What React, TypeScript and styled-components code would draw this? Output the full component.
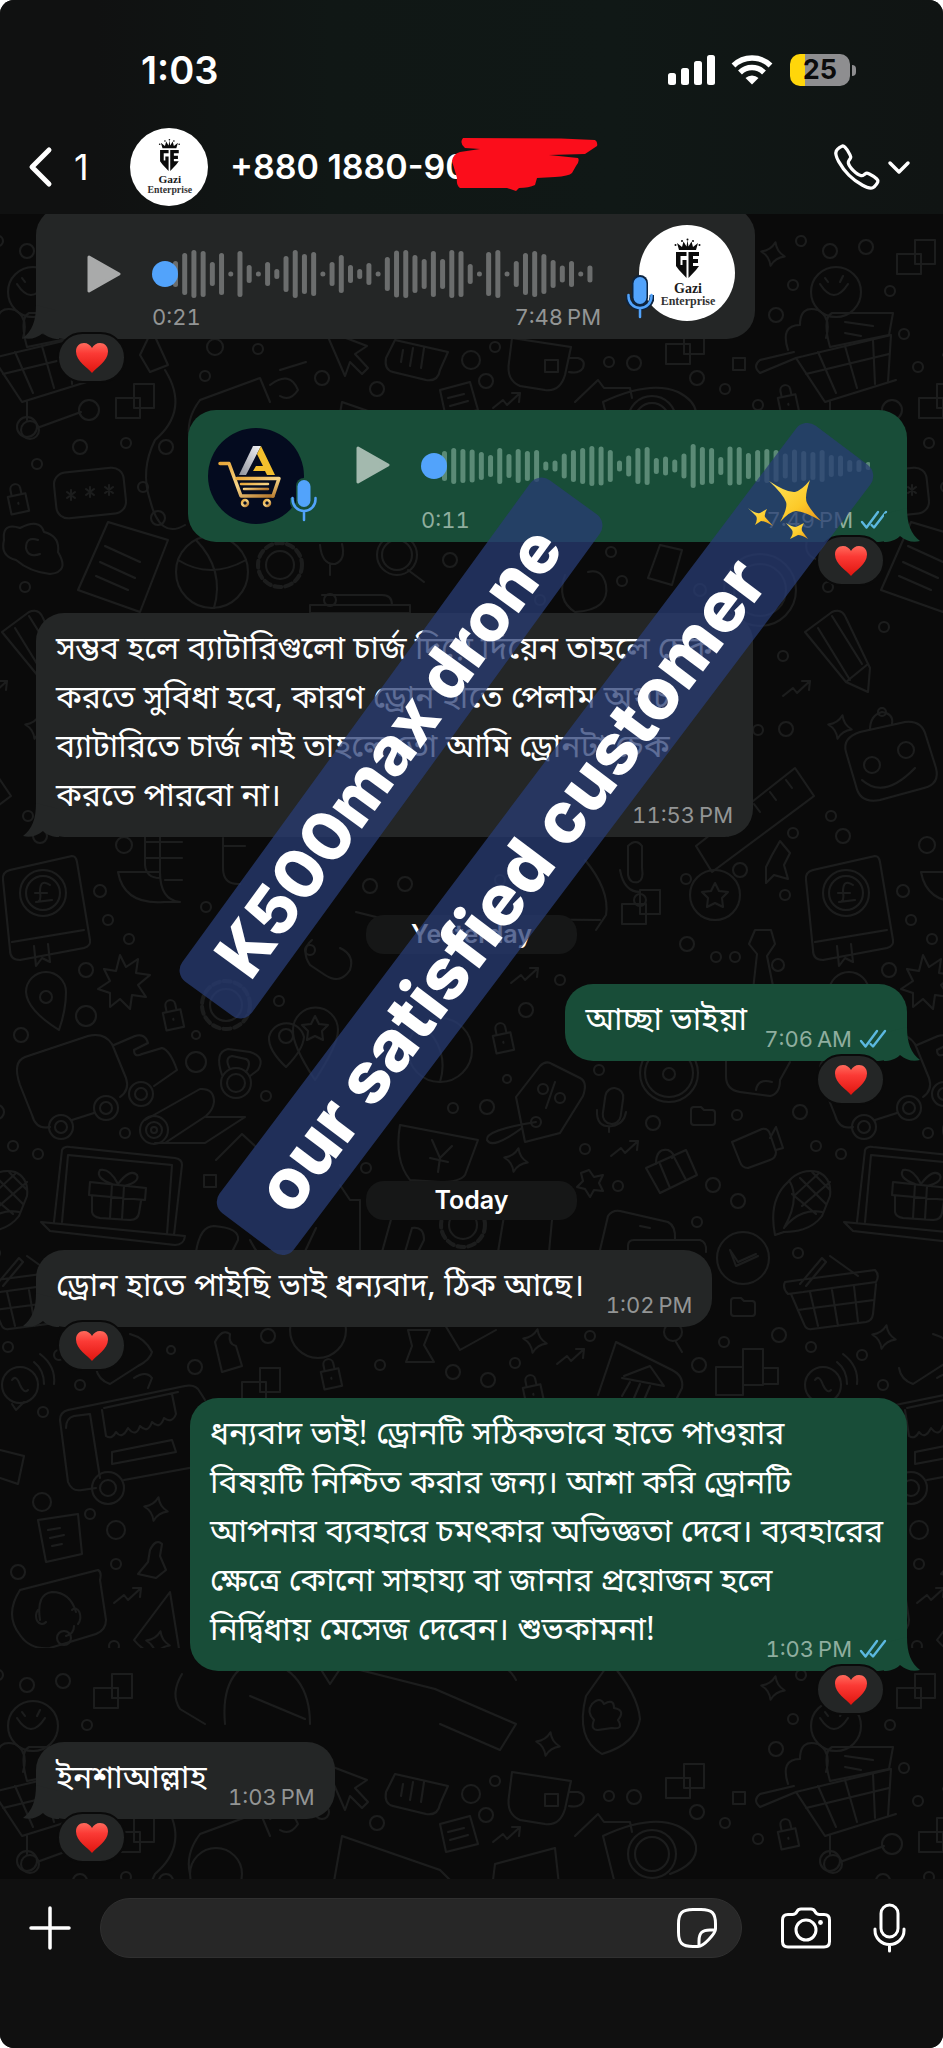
import React from "react";
import styled, { createGlobalStyle } from "styled-components";
import { IoCallOutline } from "react-icons/io5";

const GlobalStyle = createGlobalStyle`
  *, *::before, *::after { box-sizing: border-box; }
  html, body { margin: 0; padding: 0; background: #ffffff; }
  button, input { font: inherit; color: inherit; }
`;

const uiFont = `Inter, "Liberation Sans", sans-serif`;
const messageFont = `"Noto Sans Bengali", "Noto Sans", Inter, sans-serif`;

const Screen = styled.div`
  position: relative;
  display: flex;
  flex-direction: column;
  min-height: 100vh;
  overflow: hidden;
  border-radius: 14px;
  background: #0f1010;
  color: #ffffff;
  font-family: ${uiFont};
`;

const Header = styled.header`
  flex: none;
  background: linear-gradient(90deg, #101111 0%, #101111 10%, #101715 35%, #101816 65%, #101413 100%);
`;

const StatusBar = styled.div`
  display: flex;
  align-items: center;
  justify-content: space-between;
  padding: 44px 87px 0 141px;
  height: 96px;
`;

const Clock = styled.time`
  font-size: 38px;
  line-height: 48px;
  font-weight: 600;
`;

const StatusIcons = styled.div`
  display: flex;
  align-items: center;
  gap: 15px;
`;

const BatteryBody = styled.div`
  position: relative;
  display: flex;
  align-items: center;
  justify-content: center;
  width: 60px;
  height: 32px;
  margin: 0 6px 0 2px;
  border-radius: 10px;
  background: linear-gradient(90deg, #ffd60a 25%, #8e8e90 25%);
  color: #0b0b0b;
  font-size: 27px;
  line-height: 32px;
  font-weight: 700;

  &::after {
    content: "";
    position: absolute;
    right: -6px;
    top: 11px;
    width: 4px;
    height: 11px;
    border-radius: 0 4px 4px 0;
    background: #8e8e90;
  }
`;

const NavBar = styled.div`
  display: flex;
  align-items: center;
  height: 118px;
  padding: 24px 32px 0 28px;
`;

const IconButton = styled.button`
  display: flex;
  flex: none;
  align-items: center;
  padding: 0;
  border: 0;
  background: none;
  cursor: pointer;
`;

const BackButton = styled(IconButton)`
  gap: 21px;
  width: 102px;
  font-size: 36px;
  line-height: 40px;
`;

const Contact = styled.h1`
  position: relative;
  flex: 1;
  margin: 0 0 0 22px;
  font-size: 34px;
  line-height: 40px;
  font-weight: 600;
  white-space: nowrap;
`;

const Scribble = styled.svg`
  position: absolute;
  left: 219px;
  top: -10px;
`;

const CallButton = styled(IconButton)`
  gap: 4px;
`;

const Chat = styled.main`
  position: relative;
  flex: 1 0 auto;
  overflow: hidden;
  padding: 0 36px;
  background: #0a0a0a;
`;

const Wallpaper = styled.svg`
  position: absolute;
  inset: 0;
  width: 100%;
  height: 100%;
`;

const Thread = styled.ol`
  position: relative;
  display: flex;
  flex-direction: column;
  margin: -7px 0 0;
  padding: 0;
  list-style: none;
`;

const Row = styled.li<{ $own?: boolean; $reacted?: boolean }>`
  display: flex;
  justify-content: ${(p) => (p.$own ? "flex-end" : "flex-start")};
  margin-bottom: ${(p) => (p.$reacted ? 71 : 29)}px;

  &:last-child { margin-bottom: 57px; }
`;

const BubbleBox = styled.div<{ $own?: boolean }>`
  position: relative;
  max-width: 719px;
  border-radius: 28px;
  background: ${(p) => (p.$own ? "#184d38" : "#242626")};
`;

const TextBox = styled(BubbleBox)<{ $long?: boolean }>`
  width: ${(p) => (p.$long ? "717px" : "auto")};
  padding: 14px 20px;
`;

const VoiceBox = styled(BubbleBox)`
  display: flex;
  align-items: center;
  width: 719px;
  height: 132px;
  padding: ${(p) => (p.$own ? "0 19px 0 20px" : "0 20px 0 51px")};
`;

const TailShape = styled.svg<{ $own?: boolean }>`
  position: absolute;
  bottom: 0;
  ${(p) => (p.$own ? "right: -13px;" : "left: -13px; transform: scaleX(-1);")}
`;

const MessageText = styled.p`
  margin: 0;
  font-family: ${messageFont};
  font-size: 32px;
  line-height: 49px;
  white-space: pre-line;
`;

const MetaSpace = styled.span<{ $own?: boolean }>`
  display: inline-block;
  width: ${(p) => (p.$own ? 140 : 108)}px;
`;

const Meta = styled.div<{ $own?: boolean }>`
  display: flex;
  align-items: center;
  gap: 7px;
  color: ${(p) => (p.$own ? "#8fae9f" : "#939595")};
  font-size: 22px;
  line-height: 24px;
  font-variant-numeric: tabular-nums;
  white-space: nowrap;
`;

const CornerMeta = styled(Meta)`
  position: absolute;
  right: 20px;
  bottom: 10px;
`;

const Reaction = styled.button<{ $own?: boolean }>`
  position: absolute;
  bottom: -44px;
  ${(p) => (p.$own ? "right: 22px;" : "left: 21px;")}
  display: flex;
  align-items: center;
  justify-content: center;
  width: 69px;
  height: 51px;
  padding: 0;
  border: 2px solid #0a0a0a;
  border-radius: 26px;
  background: #242626;
`;

const DayChip = styled.li`
  align-self: center;
  width: 211px;
  margin: 49px 0 30px;
  border-radius: 18px;
  background: #161717;
  font-size: 25px;
  line-height: 39px;
  font-weight: 600;
  text-align: center;
`;

const AvatarWrap = styled.div`
  position: relative;
  flex: none;
  width: 96px;
  height: 96px;
`;

const AvatarMic = styled.svg<{ $side: "left" | "right" }>`
  position: absolute;
  bottom: 2px;
  ${(p) => (p.$side === "left" ? "left: -13px;" : "right: -14px;")}
`;

const PlayButton = styled(IconButton)<{ $own?: boolean }>`
  align-self: flex-start;
  margin: ${(p) => (p.$own ? "35px 31px 0 52px" : "47px 31px 0 0")};
`;

const Track = styled.div<{ $own?: boolean }>`
  display: flex;
  flex: 1;
  flex-direction: column;
  justify-content: space-between;
  align-self: stretch;
  min-width: 0;
  margin-right: ${(p) => (p.$own ? 0 : 38)}px;
  padding: ${(p) => (p.$own ? "31px 0 10px" : "42px 0 10px")};
`;

const TrackTimes = styled.div`
  display: flex;
  justify-content: space-between;
`;

const Composer = styled.form`
  display: flex;
  flex: none;
  align-items: center;
  height: 169px;
  padding: 19px 37px 90px 29px;
  background: #101010;
`;

const Field = styled.div`
  position: relative;
  flex: 1;
  height: 60px;
  margin: 0 39px 0 29px;
`;

const MessageInput = styled.input`
  width: 100%;
  height: 100%;
  padding: 0 80px 0 28px;
  border: 1px solid #303030;
  border-radius: 30px;
  outline: none;
  background: #272727;
  font-size: 28px;
`;

const StickerButton = styled(IconButton)`
  position: absolute;
  right: 24px;
  top: 9px;
`;

const MicButton = styled(IconButton)`
  margin-left: 42px;
`;

type BannerProps = { $x: string; $y: number; $length: number; $thickness: number; $angle: number; $indent: number; $size: number };

const Banner = styled.div<BannerProps>`
  position: absolute;
  left: ${(p) => p.$x};
  top: ${(p) => p.$y}px;
  width: ${(p) => p.$length}px;
  height: ${(p) => p.$thickness}px;
  padding-left: ${(p) => p.$indent}px;
  border-radius: 14px;
  background: rgba(40, 60, 116, 0.75);
  transform: translate(-50%, -50%) rotate(${(p) => p.$angle}deg);
  color: #ffffff;
  font-size: ${(p) => p.$size}px;
  line-height: ${(p) => p.$thickness}px;
  font-weight: 800;
  white-space: nowrap;
  pointer-events: none;
`;

const Sparkles = styled.svg`
  position: absolute;
  left: 79%;
  top: 478px;
  pointer-events: none;
`;

/* ---------- drawings ---------- */

const Heart = () => (
  <svg width="34" height="32" viewBox="0 0 34 32" aria-label="heart">
    <defs>
      <linearGradient id="heartFill" x1="0" y1="0" x2="0" y2="1">
        <stop offset="0" stopColor="#ff6a5c" />
        <stop offset="0.35" stopColor="#fb3a35" />
        <stop offset="1" stopColor="#e0150f" />
      </linearGradient>
    </defs>
    <path d="M17 31 C13 26 1 19 1 9.500 C1 4 4.500 1 9 1 C12.500 1 15.500 3 17 6 C18.500 3 21.500 1 25 1 C29.500 1 33 4 33 9.500 C33 19 21 26 17 31 Z" fill="url(#heartFill)" />
  </svg>
);

const Checks = () => (
  <svg width="28" height="20" viewBox="0 0 28 20" fill="none" stroke="#5cb8e0" strokeWidth="2.400" strokeLinecap="round" strokeLinejoin="round" aria-label="read">
    <path d="M2 12 L6.500 17.500 L18 2" />
    <path d="M11.500 15 L14 17.500 L26 2" />
  </svg>
);

const Tail = ({ own }: { own?: boolean }) => (
  <TailShape $own={own} width="36" height="34" viewBox="0 0 36 34" aria-hidden="true">
    <path d="M0 34 L0 6 L23 0 C23 16 27 26 36 33 C29 35 22 33 16 28 C12 32 6 34 0 34 Z" fill={own ? "#184d38" : "#242626"} />
  </TailShape>
);

const GaziLogo = ({ size }: { size: number }) => (
  <svg width={size} height={size} viewBox="0 0 96 96" role="img" aria-label="Gazi Enterprise">
    <circle cx="48" cy="48" r="48" fill="#ffffff" />
    <g fill="#0b0b0b">
      <path d="M40 25 L38 18 L43 22 L44.500 16.500 L47.500 21.500 L48.500 15 L49.500 21.500 L52.500 16.500 L54 22 L59 18 L57 25 Z" />
      <circle cx="36.500" cy="20" r="1" />
      <circle cx="60.500" cy="20" r="1" />
      <circle cx="48.500" cy="14.500" r="1" />
      <circle cx="43" cy="16" r="1" />
      <circle cx="54" cy="16" r="1" />
      <path d="M37 27 H47.500 V31 H41.500 V40 H43.500 V35 H47.500 V53 L40 45 L37 41 Z" />
      <path d="M49.500 27 H60 V31 H54 V34 H59 V38 H54 V41 H60 L57 45 L49.500 53 Z" />
    </g>
    <text x="49" y="68" textAnchor="middle" fontFamily="Liberation Serif, serif" fontWeight="700" fontSize="14" fill="#1b1b1b">Gazi</text>
    <text x="49" y="80" textAnchor="middle" fontFamily="Liberation Serif, serif" fontWeight="700" fontSize="12" fill="#333333">Enterprise</text>
  </svg>
);

const CartLogo = () => (
  <svg width="96" height="96" viewBox="0 0 96 96" role="img" aria-label="Cart logo">
    <defs>
      <linearGradient id="gold" x1="0" y1="0" x2="1" y2="1">
        <stop offset="0" stopColor="#e9a83a" />
        <stop offset="0.5" stopColor="#f7d587" />
        <stop offset="1" stopColor="#b3752a" />
      </linearGradient>
      <linearGradient id="silver" x1="1" y1="0" x2="0" y2="1">
        <stop offset="0" stopColor="#f4f4f6" />
        <stop offset="1" stopColor="#8d919c" />
      </linearGradient>
    </defs>
    <circle cx="48" cy="48" r="48" fill="#040b1f" />
    <path d="M31 47 L45 18 H53 L38 47 Z" fill="url(#silver)" />
    <path d="M53 18 L67 47 H59 L57 43 H45 L48 38 H55 L49 26 Z" fill="#f3bf2d" />
    <g fill="none" stroke="url(#gold)" strokeLinecap="round" strokeLinejoin="round">
      <path d="M12 35.500 H21 L33 68 H65" strokeWidth="3.500" />
      <path d="M29 50.500 H71 L65 68" strokeWidth="3.500" />
      <path d="M33 56 H60 M36 61 H60" strokeWidth="2.500" />
      <circle cx="37" cy="75" r="3" strokeWidth="2.500" />
      <circle cx="59" cy="75" r="3" strokeWidth="2.500" />
    </g>
  </svg>
);

const BlueMic = ({ side, rim }: { side: "left" | "right"; rim: string }) => (
  <AvatarMic $side={side} width="28" height="44" viewBox="0 0 28 44" fill="none" aria-hidden="true">
    <rect x="6" y="0" width="16" height="31" rx="8" fill={rim} />
    <path d="M2 20 V22 A12 11 0 0 0 26 22 V20" stroke={rim} strokeWidth="5" />
    <rect x="7.500" y="2" width="13" height="27" rx="6.500" fill="#52a3fb" />
    <path d="M2.500 20 V21.500 A11.500 11.500 0 0 0 25.500 21.500 V20 M14 33 V42" stroke="#52a3fb" strokeWidth="2.500" strokeLinecap="round" />
  </AvatarMic>
);

const incomingLevels = [26, 42, 48, 46, 24, 42, 5, 46, 18, 5, 24, 10, 36, 48, 40, 44, 5, 24, 38, 18, 10, 22, 5, 34, 47, 48, 38, 30, 46, 30, 48, 46, 20, 5, 44, 48, 5, 26, 42, 46, 40, 28, 17, 26, 5, 17];
const outgoingLevels = [30, 36, 34, 33, 28, 22, 36, 24, 34, 30, 32, 9, 11, 25, 32, 36, 40, 39, 32, 11, 21, 36, 38, 16, 19, 13, 25, 44, 38, 36, 18, 39, 38, 26, 32, 34, 32, 25, 33, 30, 28, 32, 22, 21, 12, 12, 8];

const Waveform = ({ levels, color }: { levels: number[]; color: string }) => (
  <svg width="449" height="50" viewBox="0 0 449 50" aria-hidden="true">
    {levels.map((level, i) => (
      <rect key={i} x={21 + i * 9.21} y={25 - level / 2} width="5" height={level} rx="2.500" fill={color} />
    ))}
    <circle cx="13" cy="25" r="13" fill="#52a3fb" />
  </svg>
);

const Play = ({ color }: { color: string }) => (
  <svg width="34" height="40" viewBox="0 0 34 40" aria-hidden="true">
    <path d="M2 3 L32 20 L2 37 Z" fill={color} stroke={color} strokeWidth="3" strokeLinejoin="round" />
  </svg>
);

const Spark = ({ x, y }: { x: number; y: number }) => (
  <path transform={`translate(${x} ${y}) rotate(12)`} d="M0 -12 Q3 -3 12 0 Q3 3 0 12 Q-3 3 -12 0 Q-3 -3 0 -12 Z" />
);
const Zig = ({ x, y }: { x: number; y: number }) => (
  <path transform={`translate(${x} ${y})`} d="M-14 8 L-4 0 L0 5 L13 -7 M5 -7 L13 -7 L12 2" />
);
const Squares = ({ x, y }: { x: number; y: number }) => (
  <path transform={`translate(${x} ${y})`} d="M0 0 H20 V24 H0 Z M-18 14 H6 V34 H-18 Z" />
);
const Padlock = ({ x, y }: { x: number; y: number }) => (
  <path transform={`translate(${x} ${y}) rotate(-12)`} d="M-9 -2 H9 V16 H-9 Z M-5 -2 V-8 A5 5 0 0 1 5 -8 V-2 M0 6 V7" />
);
const Folder = ({ x, y }: { x: number; y: number }) => (
  <path transform={`translate(${x} ${y})`} d="M-12 -6 Q-12 -9 -9 -9 H-2 L1 -6 H9 Q12 -6 12 -3 V6 Q12 9 9 9 H-9 Q-12 9 -12 6 Z" />
);
const Cog = ({ x, y, r }: { x: number; y: number; r: number }) => (
  <g transform={`translate(${x} ${y})`}>
    <circle r={r} strokeDasharray="7 4" strokeWidth="4" />
    <circle r={r - 8} />
  </g>
);

const dots: [number, number, number][] = [
  [86, 1016, 10], [21, 1035, 7], [196, 1035, 4], [196, 1062, 10], [266, 1096, 5], [125, 1133, 5], [13, 1146, 5], [38, 1154, 5],
  [279, 1001, 5], [453, 1108, 5], [366, 1168, 5], [526, 1010, 7], [507, 1079, 4], [599, 1070, 5], [487, 1107, 7], [653, 1123, 7],
  [737, 1115, 5], [800, 1112, 7], [585, 1149, 5], [713, 1185, 7], [738, 1201, 7], [618, 1186, 5], [697, 1222, 5],
  [798, 1253, 5], [779, 1335, 7], [590, 1336, 5], [724, 1342, 5], [811, 1347, 5], [862, 1355, 5], [699, 1365, 7], [515, 1363, 5],
  [453, 1372, 7], [488, 1380, 7], [268, 1336, 7], [171, 1350, 4], [195, 1367, 7], [80, 1385, 5], [43, 1412, 5], [380, 1365, 5],
  [801, 241, 5], [830, 251, 7], [866, 247, 7], [793, 285, 5], [890, 291, 5], [776, 315, 7], [904, 334, 5], [918, 367, 5],
  [697, 378, 7], [725, 389, 5], [634, 363, 7], [609, 362, 5], [471, 360, 9], [486, 381, 7], [495, 347, 5], [758, 405, 5],
  [377, 389, 7], [322, 378, 7], [258, 349, 5], [215, 347, 8], [205, 376, 5], [166, 447, 7], [126, 443, 5], [37, 464, 5],
  [143, 487, 5], [80, 447, 7], [158, 518, 7], [25, 587, 5], [611, 552, 5], [622, 581, 5], [450, 560, 7], [330, 600, 6],
  [884, 627, 5], [783, 656, 5], [758, 730, 5], [786, 729, 7], [831, 816, 5], [793, 833, 5], [740, 870, 7],
  [843, 836, 7], [686, 879, 5], [785, 895, 5], [370, 886, 7], [405, 884, 7], [124, 845, 8], [206, 907, 5],
  [108, 920, 5], [129, 939, 5], [86, 970, 7], [716, 957, 5], [735, 957, 5], [687, 944, 7], [778, 965, 6], [100, 891, 6],
  [42, 1502, 9], [90, 1514, 5], [116, 1530, 9], [18, 1572, 7], [116, 1564, 5], [114, 1646, 5], [64, 1638, 7],
  [560, 1640, 6], [270, 635, 5], [700, 590, 6], [540, 600, 5], [30, 430, 9],
  [640, 900, 6], [500, 880, 5], [560, 980, 5], [310, 950, 5],
];

const Doodles = () => (
  <g id="doodles">
    {dots.map(([x, y, r], i) => (
      <circle key={i} cx={x} cy={y} r={r} />
    ))}
    <Spark x={773} y={254} /><Spark x={516} y={1160} /><Spark x={535} y={1341} /><Spark x={884} y={1337} />
    <Spark x={840} y={727} /><Spark x={156} y={1509} /><Spark x={158} y={1643} /><Spark x={548} y={310} />
    <Zig x={507} y={400} /><Zig x={625} y={1148} /><Zig x={571} y={1356} /><Zig x={797} y={688} /><Zig x={128} y={1595} /><Zig x={525} y={975} />
    <Squares x={684} y={330} /><Squares x={134} y={384} /><Squares x={915} y={240} /><Squares x={260} y={1368} /><Squares x={640} y={890} /><Squares x={108} y={1660} />
    <path d="M733 358 h12 v12 h-12 Z M204 1175 h12 v12 h-12 Z M716 1367 h27 v28 h-27 Z M743 1349 h20 v36 h-20 Z M763 1368 h15 v16 h-15 Z" />
    <Padlock x={172} y={1013} /><Padlock x={502} y={1036} /><Padlock x={532} y={1388} /><Padlock x={330} y={1372} /><Padlock x={17} y={497} /><Padlock x={787} y={398} />
    <Folder x={703} y={1116} /><Folder x={743} y={1307} />
    <Cog x={280} y={565} r={22} /><Cog x={463} y={1225} r={22} /><Cog x={226} y={1005} r={24} />

    {/* smiling shopper and trolley */}
    <circle cx="836" cy="292" r="25" /><path d="M820 284 Q834 306 848 284 M825 278 L828 282 M843 276 L840 282" />
    <path d="M788 350 Q780 325 800 325 Q800 305 818 310 Q832 318 826 338 M832 313 H893 L889 335 L830 347 Q822 318 832 313 M845 322 L873 326 M845 333 L861 336" />
    <path d="M796 358 L891 335 L888 382 M796 358 L825 402 L896 380 M796 358 L760 373 Q752 366 760 360 L794 352 M818 352 L836 393 M845 346 L857 388 M873 340 L875 384 M806 374 L889 354 M830 402 V420 M840 428 L884 412" />
    <circle cx="830" cy="427" r="10" /><circle cx="892" cy="410" r="10" />
    {/* apps, cursor, mug */}
    <path d="M395 340 L448 352 L440 370 Q438 382 426 380 L393 372 Q384 370 386 358 Z M403 350 L401 362 M413 348 L410 366 M424 348 L421 368" />
    <path d="M325 330 L367 346 L355 354 L368 368 L362 374 L350 362 L345 376 Z" />
    <path d="M512 338 L571 347 L565 375 Q560 392 545 390 L520 386 Q506 380 509 362 Z M545 360 h13 v12 h-13 Z M569 358 h9 q8 2 5 10 q-4 6 -14 4" />
    <path d="M440 390 L470 382 L478 410 L446 418 Z M448 398 L464 394 M450 406 L468 401" />
    <path d="M575 402 L598 380 L604 388 H630 L632 398 M603 402 Q650 380 678 392 Q694 400 696 412 Q698 430 670 440 M603 402 L614 446" /><circle cx="652" cy="420" r="24" /><circle cx="652" cy="420" r="17" />
    <path d="M140 355 L152 330 L168 365 L150 372 Z M165 370 Q190 410 155 440 Q140 470 150 500 Q160 540 185 525" />
    <path d="M260 378 L200 400 Q185 420 190 440 M260 378 L270 402 M270 385 Q290 370 298 390 Q290 402 280 396 M280 370 L306 362" /><circle cx="216" cy="440" r="26" />
    <path d="M342 402 L440 436 L450 446 L445 480 L330 470 Z M495 430 L555 414 L560 460 L490 470 Z" />
    {/* password card, cloud, receipt, sports */}
    <rect x="55" y="470" width="70" height="46" rx="12" transform="rotate(-6 90 493)" />
    <path d="M71 490 v10 M67 492 l8 6 M75 492 l-8 6 M90 487 v10 M86 489 l8 6 M94 489 l-8 6 M109 485 v10 M105 487 l8 6 M113 487 l-8 6" />
    <path d="M4 540 Q2 522 20 528 Q40 518 44 532 Q60 536 58 552 Q70 572 50 574 Q30 572 16 560 Q0 556 4 540 Z M38 540 Q26 536 26 548 Q28 558 40 554" />
    <path d="M108 522 L168 540 L140 612 L78 590 Z M105 546 L140 562 M100 562 L135 578 M96 576 L128 590" />
    <circle cx="212" cy="572" r="36" /><path d="M196 540 Q225 570 214 608 M178 560 Q210 580 246 560" />
    <path d="M320 545 Q322 565 335 564 Q346 560 342 544 M330 565 V575" /><circle cx="397" cy="555" r="20" /><circle cx="397" cy="555" r="15" /><path d="M408 570 L424 582" />
    <path d="M322 595 h60 q10 0 10 10 M310 605 h100 v8 h-100 Z M330 613 v16 h70 v-16" />
    <path d="M660 545 L682 550 L672 585 L648 578 Z M565 575 Q556 600 575 612 Q610 610 606 585 Q602 568 588 572" /><circle cx="760" cy="590" r="36" /><circle cx="760" cy="590" r="26" />
    {/* pencil, note and robot */}
    <path d="M805 632 L832 612 Q842 608 846 618 L870 668 L868 692 L846 682 Z M846 682 L868 664 M818 628 L850 680 M832 616 L862 664" />
    <path d="M846 752 Q842 738 860 732 L905 722 Q922 720 926 736 L936 768 Q940 784 924 788 L880 800 Q860 804 856 786 Z M862 780 Q884 800 915 768 M870 730 Q870 715 882 712 Q894 714 892 724" />
    <circle cx="872" cy="765" r="8" /><circle cx="906" cy="750" r="8" /><circle cx="882" cy="712" r="4" />
    <path d="M696 846 L795 768 L814 796 L712 872 Z M722 828 l6 8 M738 816 l6 8 M754 804 l6 8 M770 792 l6 8 M786 780 l6 8" />
    <path d="M772 855 l8 -14 l10 12 l-6 12 l4 14 l-14 -4 l-8 8 l0 -16 Z" />
    <path d="M628 846 V875 Q630 884 638 882 Q644 880 642 868 V846 Q636 838 628 846 M620 870 Q624 892 640 892" />
    {/* savings books */}
    <path d="M3 880 Q2 872 10 870 L72 856 Q76 856 77 862 L90 940 Q91 946 84 948 L20 960 Q10 960 10 950 Z M12 942 L84 930 M34 946 L36 966 L42 958 L50 962 L48 944" />
    <circle cx="43" cy="893" r="23" /><circle cx="43" cy="893" r="17" /><path d="M50 885 Q40 878 40 892 Q42 902 36 902 L52 900 M35 893 H47" />
    <path d="M145 830 V865 Q146 878 160 878 V836 M118 872 H160 Q160 900 180 902 H164 Q124 905 118 872 M145 842 H182 M145 858 H182 M165 880 H182 M223 838 V868 Q223 885 240 884 M223 846 H245" />
    <circle cx="715" cy="895" r="25" /><path d="M715 883 l4 8 l9 1 l-6 6 l1 9 l-8 -4 l-8 4 l1 -9 l-6 -6 l9 -1 Z" />
    <path d="M356 912 L380 918 L600 920 M585 860 Q610 890 606 915 L596 930" />
    <path d="M312 940 Q300 950 310 965 L325 975 Q340 985 350 970 Q355 955 340 948 M755 930 h16 l4 14 l-8 12 l10 50 l-14 14 l-12 -12 l6 -54 l-8 -10 Z" />
    <path d="M120 955 l6 12 l12 -8 l-2 14 l14 2 l-12 10 l8 12 l-14 -2 l-2 14 l-10 -10 l-10 8 l0 -14 l-12 -4 l12 -8 l-6 -12 l12 2 Z" />
    {/* map pins, balloon, van, kettlebell, mat */}
    <path d="M59 1030 Q27 1010 26 992 A20 20 0 0 1 66 992 Q66 1010 59 1030 Z" /><circle cx="46" cy="997" r="6" />
    <path d="M286 1067 Q268 1050 269 1037 A18 18 0 0 1 304 1037 Q303 1050 286 1067 Z M315 1080 Q292 1045 293 1030 A22 22 0 0 1 338 1030 Q338 1045 315 1080 Z" /><circle cx="286" cy="1036" r="7" />
    <path d="M315 1016 l4 8 l9 1 l-6 6 l1 9 l-8 -4 l-8 4 l1 -9 l-6 -6 l9 -1 Z" />
    <path d="M50 1127 Q36 1130 32 1115 L20 1085 Q12 1062 25 1057 L88 1036 Q104 1032 112 1044 L126 1078 Q130 1090 120 1097 M72 1120 L94 1113 M114 1045 L135 1036 Q145 1033 148 1043 L134 1050 Q134 1058 142 1054 L162 1048 Q170 1050 177 1070 L154 1086" />
    <circle cx="61" cy="1127" r="12" /><circle cx="61" cy="1127" r="6" /><circle cx="106" cy="1108" r="12" /><circle cx="106" cy="1108" r="6" /><circle cx="141" cy="1094" r="12" /><circle cx="141" cy="1094" r="6" />
    <circle cx="236" cy="1083" r="15" /><circle cx="236" cy="1083" r="9" /><path d="M222 1075 Q214 1052 228 1049 L250 1052 Q266 1057 258 1070 L250 1076 M230 1069 Q224 1058 232 1056 L246 1059 Q252 1062 246 1072" />
    <circle cx="154" cy="1130" r="14" /><circle cx="154" cy="1130" r="8" /><circle cx="154" cy="1130" r="3" /><path d="M145 1120 L200 1089 Q214 1088 214 1102 Q213 1110 206 1116 L165 1143 M206 1117 L245 1117 L205 1143 L155 1143 M216 1160 L242 1134 L255 1146" />
    <circle cx="440" cy="1050" r="32" /><path d="M422 1024 Q450 1050 440 1082" />
    {/* laptop with a gift */}
    <path d="M54 1222 L62 1150 Q64 1146 70 1147 L175 1158 Q182 1159 182 1165 L174 1235 M62 1222 L68 1155 L172 1165 L167 1234 M41 1222 L185 1236 Q184 1245 175 1245 L50 1231 Z" />
    <path d="M90 1182 L146 1188 L145 1200 L89 1195 Z M92 1196 V1212 Q93 1217 100 1218 L130 1220 Q138 1220 139 1213 L141 1201 M112 1184 L110 1218 M124 1186 L122 1219 M112 1184 Q95 1178 100 1170 Q110 1168 118 1184 Q130 1168 137 1175 Q140 1182 124 1186" />
    <path d="M196 1252 Q200 1226 214 1226 Q240 1228 238 1240 L232 1252 M250 1240 Q270 1280 300 1262 L316 1228 M340 1185 L350 1200 L360 1200 V1252 M382 1252 L392 1216 M405 1252 L412 1228 Q424 1226 424 1240 L418 1252" />
    {/* price tag, mic, clock, gift, camera */}
    <path d="M516 1097 L540 1066 Q546 1060 552 1064 L580 1078 Q588 1082 583 1096 L560 1133 L525 1142 Z M536 1122 Q485 1130 487 1140 Q492 1150 522 1128 M555 1082 L546 1108" /><circle cx="536" cy="1122" r="5" /><circle cx="543" cy="1089" r="5" /><circle cx="560" cy="1098" r="5" />
    <rect x="604" y="1088" width="18" height="36" rx="9" transform="rotate(8 613 1106)" /><path d="M597 1110 Q596 1128 612 1126 Q624 1124 626 1112 M609 1127 V1132" />
    <circle cx="669" cy="1073" r="29" /><circle cx="669" cy="1073" r="24" /><circle cx="669" cy="1074" r="6" />
    <path d="M726 1060 V1076 Q726 1090 740 1092 L770 1096 Q780 1094 780 1080 L790 1062 M756 1090 Q758 1078 772 1082" />
    <path d="M400 1125 L478 1140 L465 1175 Q460 1182 440 1182 L410 1180 Q394 1160 400 1125 Z M432 1140 L440 1158 L452 1146 M440 1158 L438 1172 M430 1158 L448 1162" />
    <path d="M646 1168 L686 1150 L697 1175 L660 1193 Z M656 1164 Q656 1148 668 1150 Q676 1154 672 1158 M660 1164 L670 1188 M674 1157 L686 1180" />
    <path d="M732 1142 L762 1129 Q768 1128 770 1134 L776 1152 Q776 1158 770 1160 L748 1168 Q742 1168 740 1162 Z M770 1138 L776 1127 L783 1148 L776 1150" />
    <path d="M589 1170 l5 7 l9 -2 l-4 8 l4 8 l-9 -1 l-4 7 l-5 -8 l-8 -2 l6 -6 l-2 -8 Z" />
    {/* corn, check badge, basket, cards */}
    <path d="M775 1235 Q768 1200 788 1182 Q800 1168 818 1172 Q832 1178 830 1196 L822 1216 Q810 1232 784 1232 Z M784 1228 Q800 1200 790 1182 M784 1228 Q800 1208 822 1212 M800 1178 L826 1204 M812 1172 L830 1190 M792 1194 L816 1214 M830 1182 L802 1206 M818 1174 L794 1196" />
    <circle cx="743" cy="1258" r="26" /><path d="M730 1250 L736 1266 L758 1256 M730 1250 L738 1262 L756 1254" />
    <path d="M785 1282 L875 1270 Q880 1275 876 1282 L788 1294 Q782 1288 785 1282 Z M791 1294 L804 1324 Q806 1330 812 1329 L866 1322 Q872 1321 873 1314 L876 1284 M800 1284 L822 1258 L826 1262 L806 1286 M830 1256 L858 1276 M810 1292 L818 1326 M832 1290 L838 1326 M854 1286 L858 1322 M798 1310 L874 1300" />
    <path d="M600 1250 L608 1216 Q612 1210 620 1211 L668 1222 Q676 1226 675 1240 M628 1250 V1246 Q628 1240 634 1240 H700 Q707 1242 706 1252 M640 1226 L650 1228 M498 1252 L504 1216 M549 1252 L552 1220" />
    {/* bank note, radio, planet, puppy */}
    <path d="M598 1395 L616 1342 L672 1370 Q684 1376 682 1388 L676 1400 M624 1376 L650 1366 L664 1386 L622 1378 M630 1382 L622 1396 M640 1384 L634 1398 M650 1386 L644 1400" />
    <path d="M664 1332 a9 9 0 1 0 18 0 a9 9 0 1 0 -18 0 M676 1342 L682 1352 M445 1325 L460 1350 L496 1330 M408 1330 H430 L424 1345 L434 1362 H406 L412 1346 Z" />
    <circle cx="20" cy="1385" r="18" /><path d="M12 1404 L16 1410 L24 1402 M12 1380 Q16 1374 20 1385 M28 1390 Q24 1394 20 1385 M34 1362 Q44 1370 44 1384 M40 1354 Q56 1366 54 1384" />
    <path d="M130 1334 Q145 1338 152 1352 Q150 1360 138 1366 L110 1384 Q98 1380 96 1368 M134 1378 Q146 1370 152 1378 L148 1388" /><circle cx="318" cy="1330" r="28" />
    <path d="M215 1342 Q222 1328 230 1334 Q228 1344 236 1346 L242 1366 L222 1372 Z" />
    {/* market van */}
    <path d="M60 1420 Q60 1412 68 1410 L185 1386 Q196 1384 200 1392 L205 1400 M60 1420 L68 1482 Q72 1492 82 1490 L96 1488 M66 1428 Q66 1418 74 1416 L90 1414 L100 1478 M124 1480 L200 1466 M104 1408 L178 1392 M102 1410 L106 1436 Q112 1440 116 1432 Q122 1440 128 1428 Q136 1438 140 1426 Q148 1434 152 1422 Q160 1430 164 1418 Q172 1424 176 1414 L172 1394 M112 1452 L172 1440 L176 1452 L112 1464 Z" />
    <circle cx="108" cy="1488" r="16" /><circle cx="108" cy="1488" r="8" />
    <path d="M0 1450 L24 1456 L18 1484 L0 1478 M38 1520 L78 1514 L82 1554 L46 1562 Z M48 1530 L60 1528 M50 1538 L64 1535 M52 1546 L62 1544" />
    <path d="M150 1550 Q156 1538 162 1544 L160 1556 L166 1570 L156 1578 L138 1574 L148 1562 Z M170 1592 L134 1640 Q150 1660 180 1655 Z" />
    <path d="M20 1590 L98 1570 Q102 1572 100 1580 L106 1620 Q106 1630 96 1634 L50 1648 Q30 1650 20 1635 Q4 1615 20 1590 Z M40 1620 Q36 1594 52 1592 Q70 1592 76 1612 M38 1610 a6 8 0 1 0 8 12 M72 1610 a5 8 0 1 1 6 14 M74 1626 Q74 1634 66 1636" />
    {/* strip that meets the footer */}
    <path d="M182 240 Q170 260 180 275 L205 290 M225 290 Q220 235 260 225 Q310 235 310 290 M250 262 L305 285 M305 225 L320 234 L330 250 L342 232 L360 225 M360 236 L435 255 L516 290 L500 316 L440 290 M480 232 Q505 225 516 246" />
    <path d="M586 262 Q575 305 602 320 Q636 310 640 285 Q638 260 610 228 Z M592 270 q8 -8 12 0 q10 -6 10 4 q12 2 4 12 q6 10 -6 8 l-14 2 q-8 0 -4 -10 q-8 -8 -2 -16" />
  </g>
);

const ChatWallpaper = () => (
  <Wallpaper aria-hidden="true">
    <defs>
      <pattern id="doodlePattern" width="803" height="1434" patternUnits="userSpaceOnUse">
        <g transform="translate(0 -214)" fill="none" stroke="#1c1d1d" strokeWidth="2" strokeLinejoin="round" strokeLinecap="round">
          <Doodles />
          <use href="#doodles" x="-803" />
        </g>
      </pattern>
    </defs>
    <rect width="100%" height="100%" fill="url(#doodlePattern)" />
  </Wallpaper>
);

/* ---------- message parts ---------- */

type MessageProps = { own?: boolean; long?: boolean; time: string; reacted?: boolean; children: string };

const Message = ({ own, long, time, reacted, children }: MessageProps) => (
  <Row $own={own} $reacted={reacted}>
    <TextBox $own={own} $long={long}>
      <Tail own={own} />
      <MessageText lang="bn">
        {children}
        <MetaSpace $own={own} />
      </MessageText>
      <CornerMeta $own={own}>
        <time>{time}</time>
        {own && <Checks />}
      </CornerMeta>
      {reacted && (
        <Reaction $own={own} type="button" aria-label="Heart reaction">
          <Heart />
        </Reaction>
      )}
    </TextBox>
  </Row>
);

const VoiceMessage = ({ own, duration, time }: { own?: boolean; duration: string; time: string }) => (
  <Row $own={own} $reacted>
    <VoiceBox $own={own}>
      <Tail own={own} />
      {own && (
        <AvatarWrap>
          <CartLogo />
          <BlueMic side="right" rim="#184d38" />
        </AvatarWrap>
      )}
      <PlayButton $own={own} type="button" aria-label="Play voice message">
        <Play color={own ? "#a3b9ae" : "#a9aaaa"} />
      </PlayButton>
      <Track $own={own}>
        <Waveform levels={own ? outgoingLevels : incomingLevels} color={own ? "#5b8a76" : "#6b6d6d"} />
        <TrackTimes>
          <Meta $own={own}>{duration}</Meta>
          <Meta $own={own}>
            <time>{time}</time>
            {own && <Checks />}
          </Meta>
        </TrackTimes>
      </Track>
      {!own && (
        <AvatarWrap>
          <GaziLogo size={96} />
          <BlueMic side="left" rim="#0d2440" />
        </AvatarWrap>
      )}
      <Reaction $own={own} type="button" aria-label="Heart reaction">
        <Heart />
      </Reaction>
    </VoiceBox>
  </Row>
);

export default function App() {
  return (
    <>
      <GlobalStyle />
      <Screen>
        <Header>
          <StatusBar>
            <Clock>1:03</Clock>
            <StatusIcons>
              <svg width="48" height="30" viewBox="0 0 48 30" fill="#ffffff" aria-label="Signal">
                <rect x="0" y="18" width="8" height="12" rx="2.500" />
                <rect x="13" y="13" width="8" height="17" rx="2.500" />
                <rect x="26" y="6" width="8" height="24" rx="2.500" />
                <rect x="39" y="0" width="8" height="30" rx="2.500" />
              </svg>
              <svg width="42" height="30" viewBox="0 0 42 30" fill="none" stroke="#ffffff" strokeWidth="5.500" aria-label="Wi-Fi">
                <path d="M2.500 10.500 A26.500 26.500 0 0 1 39.500 10.500" />
                <path d="M9 17.500 A17 17 0 0 1 33 17.500" />
                <path d="M21 29.500 L14.500 23 A9.500 9.500 0 0 1 27.500 23 Z" fill="#ffffff" stroke="none" />
              </svg>
              <BatteryBody>25</BatteryBody>
            </StatusIcons>
          </StatusBar>
          <NavBar>
            <BackButton type="button" aria-label="Back, 1 unread chat">
              <svg width="25" height="42" viewBox="0 0 25 42" fill="none" stroke="#ffffff" strokeWidth="5" strokeLinecap="round" strokeLinejoin="round">
                <path d="M21 4 L4 21 L21 38" />
              </svg>
              1
            </BackButton>
            <GaziLogo size={78} />
            <Contact>
              +880 1880-90
              <Scribble width="150" height="56" viewBox="450 136 150 56" aria-hidden="true">
                <path
                  d="M464 137 L562 137.500 L596 139 Q599 141 598 145 L586 153 L550 154 L579 157 Q581 160 577 165 L573 172 Q570 175 556 176 L538 177 L536 184 Q530 187 520 187 L517 190 L508 187 L461 187 Q457 184 458 177 L453 160 Q454 153 461 151 L481 148 L466 147 Q460 142 464 137 Z"
                  fill="#fb0d1b"
                />
              </Scribble>
            </Contact>
            <CallButton type="button" aria-label="Call options">
              <IoCallOutline size={52} />
              <svg width="24" height="15" viewBox="0 0 24 15" fill="none" stroke="#ffffff" strokeWidth="3.500" strokeLinecap="round" strokeLinejoin="round">
                <path d="M3 3 L12 12 L21 3" />
              </svg>
            </CallButton>
          </NavBar>
        </Header>

        <Chat>
          <ChatWallpaper />
          <Thread>
            <VoiceMessage duration="0:21" time={"7:48\u202fPM"} />
            <VoiceMessage own duration="0:11" time={"7:49\u202fPM"} />
            <Message long time={"11:53\u202fPM"}>
              {"সম্ভব হলে ব্যাটারিগুলো চার্জ দিয়ে দিয়েন তাহলে চেক\nকরতে সুবিধা হবে, কারণ ড্রোন হাতে পেলাম অথচ\nব্যাটারিতে চার্জ নাই তাহলে তো আমি ড্রোনটা চেক\nকরতে পারবো না।"}
            </Message>
            <DayChip>Yesterday</DayChip>
            <Message own reacted time={"7:06\u202fAM"}>আচ্ছা ভাইয়া</Message>
            <DayChip>Today</DayChip>
            <Message reacted time={"1:02\u202fPM"}>ড্রোন হাতে পাইছি ভাই ধন্যবাদ, ঠিক আছে।</Message>
            <Message own long reacted time={"1:03\u202fPM"}>
              {"ধন্যবাদ ভাই! ড্রোনটি সঠিকভাবে হাতে পাওয়ার\nবিষয়টি নিশ্চিত করার জন্য। আশা করি ড্রোনটি\nআপনার ব্যবহারে চমৎকার অভিজ্ঞতা দেবে। ব্যবহারের\nক্ষেত্রে কোনো সাহায্য বা জানার প্রয়োজন হলে\nনির্দ্বিধায় মেসেজ দেবেন। শুভকামনা!"}
            </Message>
            <Message reacted time={"1:03\u202fPM"}>ইনশাআল্লাহ</Message>
          </Thread>
        </Chat>

        <Composer>
          <IconButton type="button" aria-label="Add attachment">
            <svg width="42" height="44" viewBox="0 0 42 44" fill="none" stroke="#ffffff" strokeWidth="3.500" strokeLinecap="round">
              <path d="M21 2 V42 M2 22 H40" />
            </svg>
          </IconButton>
          <Field>
            <MessageInput type="text" aria-label="Message" />
            <StickerButton type="button" aria-label="Stickers">
              <svg width="42" height="42" viewBox="0 0 42 42" fill="none" stroke="#ffffff" strokeWidth="3" strokeLinejoin="round">
                <path d="M22 39.500 H17 C6 39.500 2.500 36 2.500 25 V17 C2.500 6 6 2.500 17 2.500 H25 C36 2.500 39.500 6 39.500 17 V22 C39.500 26 28 39.500 22 39.500 Z" />
                <path d="M23 39 V34 C23 26 26 23 34 23 H39" />
              </svg>
            </StickerButton>
          </Field>
          <IconButton type="button" aria-label="Camera">
            <svg width="50" height="42" viewBox="0 0 50 42" fill="none" stroke="#ffffff" strokeWidth="3" strokeLinejoin="round">
              <path d="M7 7.500 H11.500 C14 7.500 15 6.500 16 4.500 C17 2.500 18 2 20 2 H30 C32 2 33 2.500 34 4.500 C35 6.500 36 7.500 38.500 7.500 H43 Q48.500 7.500 48.500 13 V34.500 Q48.500 40 43 40 H7 Q1.500 40 1.500 34.500 V13 Q1.500 7.500 7 7.500 Z" />
              <circle cx="25" cy="23" r="10" />
              <circle cx="39.500" cy="15.500" r="2.400" fill="#ffffff" stroke="none" />
            </svg>
          </IconButton>
          <MicButton type="button" aria-label="Record voice message">
            <svg width="33" height="50" viewBox="0 0 33 50" fill="none" stroke="#ffffff" strokeWidth="3" strokeLinecap="round">
              <rect x="8" y="2" width="17" height="32" rx="8.500" />
              <path d="M2 26 V27.500 A14.500 14 0 0 0 31 27.500 V26 M16.500 41.500 V48" />
            </svg>
          </MicButton>
        </Composer>

        <Banner $x="41.5%" $y={748} $length={620} $thickness={86} $angle={-54} $indent={38} $size={67}>
          K500max drone
        </Banner>
        <Banner $x="57.8%" $y={839} $length={986} $thickness={93} $angle={-53} $indent={38} $size={71}>
          our satisfied customer
        </Banner>
        <Sparkles width="78" height="66" viewBox="745 478 78 66" aria-label="sparkles">
          <defs>
            <linearGradient id="sparkle" x1="0" y1="0" x2="1" y2="1">
              <stop offset="0" stopColor="#ffe65c" />
              <stop offset="0.6" stopColor="#fdc928" />
              <stop offset="1" stopColor="#e8921c" />
            </linearGradient>
          </defs>
          <g fill="url(#sparkle)">
            <path d="M769 481 Q787 493 795 492 Q802 490 810 480 Q804 497 807 503 Q811 511 821 521 Q804 511 796 511 Q790 511 780 522 Q788 508 786 502 Q783 494 769 481 Z" />
            <path d="M748 508 Q755 514 760 513 L767 509 Q764 514 765 517 L773 526 Q765 521 761 521 L755 525 Q758 519 756 516 Z" />
            <path d="M786 523 Q792 527 796 527 L804 523 Q801 528 802 531 L808 539 Q802 535 798 535 L790 539 Q794 533 792 530 Z" />
          </g>
        </Sparkles>
      </Screen>
    </>
  );
}
